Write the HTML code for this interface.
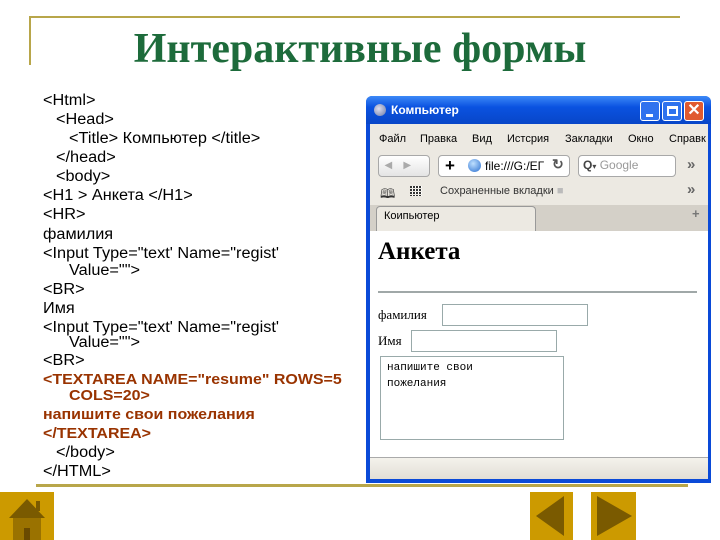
<!DOCTYPE html>
<html><head><meta charset="utf-8"><style>
*{margin:0;padding:0;box-sizing:border-box}
body{width:720px;height:540px;background:#fff;position:relative;overflow:hidden;font-family:"Liberation Sans",sans-serif}
.a{position:absolute;white-space:nowrap}
.c{font-size:15.5px;color:#000;line-height:16px;transform:scaleX(1.05);transform-origin:0 0}
.b{font-weight:bold;color:#993300;font-size:15px;transform:scaleX(1.065)}
.ui{font-family:"Liberation Sans","DejaVu Sans",sans-serif;font-size:11px;color:#000}
</style></head><body>
<div class="a" style="left:30px;top:16px;width:650px;height:2px;background:#b8a64a"></div>
<div class="a" style="left:29px;top:16px;width:2px;height:49px;background:#b8a64a"></div>
<div class="a" style="left:0;top:25px;width:720px;text-align:center;font-family:'Liberation Serif',serif;font-weight:bold;font-size:42px;color:#1d6b3b">Интерактивные формы</div>

<div class="a c" style="left:43px;top:93px">&lt;Html&gt;</div>
<div class="a c" style="left:56px;top:112px">&lt;Head&gt;</div>
<div class="a c" style="left:69px;top:131px">&lt;Title&gt; Компьютер &lt;/title&gt;</div>
<div class="a c" style="left:56px;top:150px">&lt;/head&gt;</div>
<div class="a c" style="left:56px;top:169px">&lt;body&gt;</div>
<div class="a c" style="left:43px;top:188px">&lt;H1 &gt; Анкета &lt;/H1&gt;</div>
<div class="a c" style="left:43px;top:207px">&lt;HR&gt;</div>
<div class="a c" style="left:43px;top:227px">фамилия</div>
<div class="a c" style="left:43px;top:246px">&lt;Input Type="text' Name="regist'</div>
<div class="a c" style="left:69px;top:263px">Value=""&gt;</div>
<div class="a c" style="left:43px;top:282px">&lt;BR&gt;</div>
<div class="a c" style="left:43px;top:301px">Имя</div>
<div class="a c" style="left:43px;top:320px">&lt;Input Type="text' Name="regist'</div>
<div class="a c" style="left:69px;top:335px">Value=""&gt;</div>
<div class="a c" style="left:43px;top:353px">&lt;BR&gt;</div>
<div class="a c b" style="left:43px;top:372px">&lt;TEXTAREA NAME="resume" ROWS=5</div>
<div class="a c b" style="left:69px;top:388px">COLS=20&gt;</div>
<div class="a c b" style="left:43px;top:407px">напишите свои пожелания</div>
<div class="a c b" style="left:43px;top:426px">&lt;/TEXTAREA&gt;</div>
<div class="a c" style="left:56px;top:445px">&lt;/body&gt;</div>
<div class="a c" style="left:43px;top:464px">&lt;/HTML&gt;</div>

<div class="a" style="left:366px;top:96px;width:345px;height:387px;background:#0a4ad8;border-radius:6px 6px 0 0"></div>
<div class="a" style="left:366px;top:96px;width:345px;height:28px;background:linear-gradient(#3d8af7,#0a52e0 40%,#0846c8);border-radius:6px 6px 0 0"></div>
<div class="a" style="left:374px;top:104px;width:12px;height:12px;border-radius:50%;background:radial-gradient(circle at 40% 40%,#dde,#6a7aa8)"></div>
<div class="a" style="left:391px;top:103px;color:#fff;font-weight:bold;font-size:12px">Компьютер</div>
<div class="a" style="left:640px;top:101px;width:20px;height:20px;background:#2f72ee;border:1px solid #fff;border-radius:3px"><div style="position:absolute;left:5px;top:12px;width:7px;height:3px;background:#fff"></div></div>
<div class="a" style="left:662px;top:101px;width:20px;height:20px;background:#2f72ee;border:1px solid #fff;border-radius:3px"><div style="position:absolute;left:4px;top:4px;width:11px;height:10px;border:2px solid #fff;border-top-width:3px"></div></div>
<div class="a" style="left:684px;top:101px;width:20px;height:20px;background:#e05a30;border:1px solid #fff;border-radius:3px;color:#fff;font-weight:bold;font-size:16px;line-height:18px;text-align:center">✕</div>
<div class="a" style="left:370px;top:124px;width:338px;height:107px;background:#ece9e2"></div>
<div class="a ui" style="left:379px;top:133px">Файл</div>
<div class="a ui" style="left:420px;top:133px">Правка</div>
<div class="a ui" style="left:472px;top:133px">Вид</div>
<div class="a ui" style="left:507px;top:133px">Истсрия</div>
<div class="a ui" style="left:565px;top:133px">Закладки</div>
<div class="a ui" style="left:628px;top:133px">Окно</div>
<div class="a ui" style="left:669px;top:133px">Справк</div>
<div class="a" style="left:378px;top:155px;width:52px;height:22px;border:1px solid #a8a8a8;border-radius:4px;background:linear-gradient(#fff,#e4e4e4);color:#aaa;font-size:10px;line-height:20px">&nbsp;&nbsp;◀&nbsp;&nbsp;&nbsp;&nbsp;▶</div>
<div class="a" style="left:438px;top:155px;width:132px;height:22px;border:1px solid #a8a8a8;border-radius:4px;background:#fff"></div>
<div class="a" style="left:445px;top:155px;font-size:17px;font-weight:bold;line-height:22px">+</div>
<div class="a" style="left:468px;top:159px;width:13px;height:13px;border-radius:50%;background:radial-gradient(circle at 40% 35%,#bfe0ff,#2a6fd0)"></div>
<div class="a ui" style="left:485px;top:159px;font-size:12px">file:///G:/EГ</div>
<div class="a" style="left:552px;top:156px;font-size:14px;font-weight:bold;color:#555">↻</div>
<div class="a" style="left:578px;top:155px;width:98px;height:22px;border:1px solid #a8a8a8;border-radius:4px;background:#fff"></div>
<div class="a ui" style="left:583px;top:158px;font-size:12px;font-weight:bold;color:#444">Q<span style="font-size:8px">▾</span> <span style="font-weight:normal;color:#999">Google</span></div>
<div class="a" style="left:687px;top:156px;color:#666;font-size:15px;font-weight:bold">»</div>
<div class="a" style="left:380px;top:185px;font-size:13px;color:#333">🕮</div>
<div class="a" style="left:410px;top:186px;width:12px;height:10px;background:repeating-linear-gradient(90deg,#333 0 2px,transparent 2px 3px),#fff;-webkit-mask:repeating-linear-gradient(#000 0 2px,transparent 2px 3px)"></div>
<div class="a ui" style="left:440px;top:185px;color:#333">Сохраненные вкладки <span style="color:#bbb">■</span></div>
<div class="a" style="left:687px;top:181px;color:#666;font-size:15px;font-weight:bold">»</div>
<div class="a" style="left:370px;top:205px;width:338px;height:26px;background:#d4d0c8"></div>
<div class="a" style="left:376px;top:206px;width:160px;height:25px;background:#ece9e2;border:1px solid #999;border-bottom:none;border-radius:4px 4px 0 0"></div>
<div class="a ui" style="left:384px;top:210px">Коипьютер</div>
<div class="a" style="left:692px;top:206px;color:#777;font-weight:bold;font-size:13px">+</div>
<div class="a" style="left:370px;top:231px;width:338px;height:226px;background:#fff"></div>
<div class="a" style="left:378px;top:238px;font-family:'Liberation Serif',serif;font-weight:bold;font-size:25px">Анкета</div>
<div class="a" style="left:378px;top:291px;width:319px;height:2px;background:#a0a8a8"></div>
<div class="a" style="left:378px;top:307px;font-family:'Liberation Serif',serif;font-size:13px">фамилия</div>
<div class="a" style="left:442px;top:304px;width:146px;height:22px;border:1px solid #9aa"></div>
<div class="a" style="left:378px;top:333px;font-family:'Liberation Serif',serif;font-size:13px">Имя</div>
<div class="a" style="left:411px;top:330px;width:146px;height:22px;border:1px solid #9aa"></div>
<div class="a" style="left:380px;top:356px;width:184px;height:84px;border:1px solid #9aa"></div>
<div class="a" style="left:387px;top:360px;font-family:'Liberation Mono',monospace;font-size:11px;line-height:16px">напишите свои<br>пожелания</div>
<div class="a" style="left:370px;top:457px;width:338px;height:22px;background:linear-gradient(#f4f2ec,#e2dfd6);border-top:1px solid #aaa"></div>

<div class="a" style="left:36px;top:484px;width:652px;height:3px;background:#b8a64a"></div>
<div class="a" style="left:0;top:492px;width:54px;height:48px;background:#cc9a00"></div>
<svg class="a" style="left:0;top:492px" width="54" height="48"><polygon points="27,7 45,26 9,26" fill="#7a5a00"/><rect x="36" y="9" width="4" height="10" fill="#7a5a00"/><rect x="13" y="26" width="28" height="22" fill="#9a7200"/><rect x="24" y="36" width="6" height="12" fill="#6a4a00"/></svg>
<div class="a" style="left:530px;top:492px;width:43px;height:48px;background:#cc9a00"></div>
<svg class="a" style="left:530px;top:492px" width="43" height="48"><polygon points="6,24 34,4 34,44" fill="#7a5a00"/></svg>
<div class="a" style="left:591px;top:492px;width:45px;height:48px;background:#cc9a00"></div>
<svg class="a" style="left:591px;top:492px" width="45" height="48"><polygon points="6,4 41,24 6,44" fill="#7a5a00"/></svg>
</body></html>
